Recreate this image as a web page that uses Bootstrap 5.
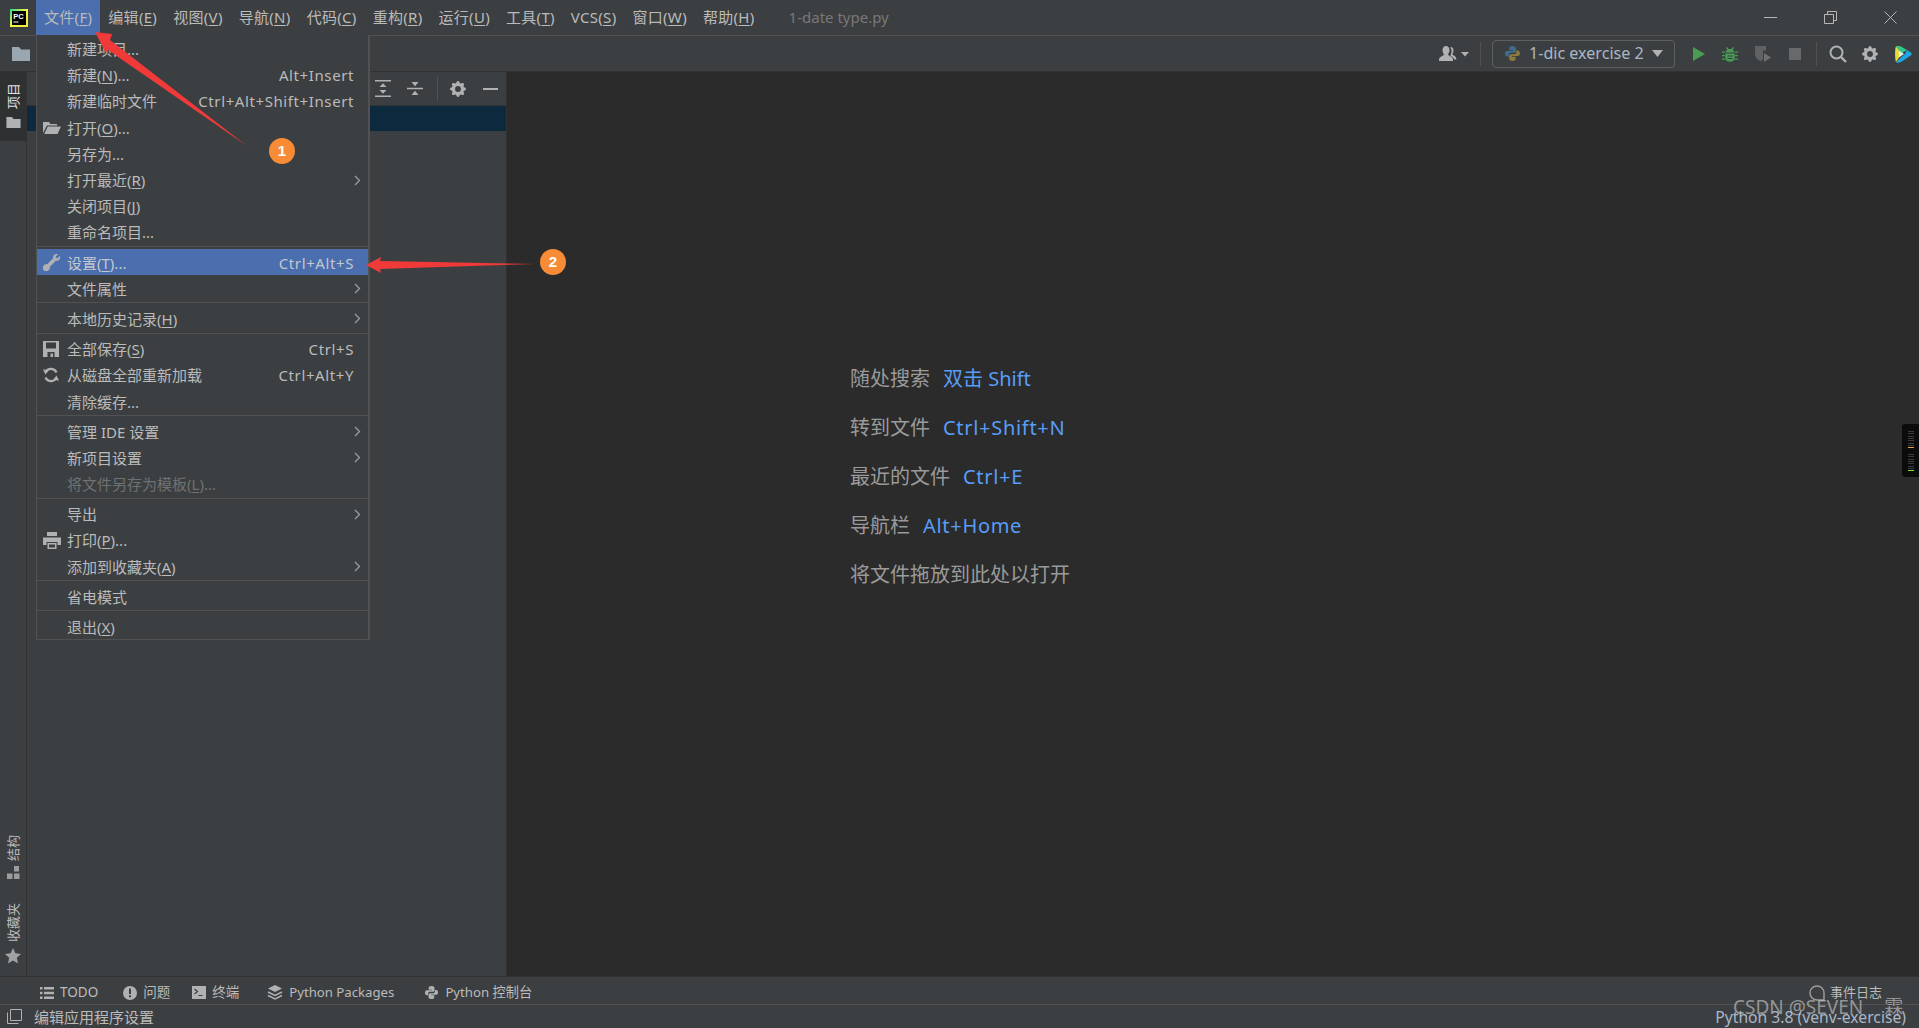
<!DOCTYPE html>
<html lang="zh">
<head>
<meta charset="UTF-8" />
<meta name="viewport" content="width=device-width, initial-scale=1.0" />
<title>PyCharm 设置</title>
<link href="https://cdn.jsdelivr.net/npm/bootstrap@5.3.0/dist/css/bootstrap.min.css" rel="stylesheet" />
<style>
  html, body { height: 100%; }
  body {
    background: #3c3f41;
    color: #bbbbbb;
    font-family: "Noto Sans", "Noto Sans CJK SC", sans-serif;
    font-size: 15px;
    line-height: 1.2;
    overflow: hidden;
  }
  u { text-underline-offset: 2px; }
  svg { display: block; flex: none; }
  .ide-title { height: 36px; border-bottom: 1px solid #515151; }
  .ide-logo { margin: 9px 8px 0 10px; }
  .ide-top { padding: 0 8px; height: 35px; line-height: 35px; white-space: nowrap; letter-spacing: .3px; }
  .ide-top-on { background: #4b6eaf; }
  .ide-file { color: #787878; margin-left: 18px; letter-spacing: 0; }
  .ide-wins { height: 35px; gap: 47px; padding-right: 22px; }
  .ide-bar { height: 35px; padding-left: 12px; }
  .ide-folder { color: #9aa7b0; }
  .ide-run { padding-right: 7px; }
  .ide-vsep { width: 1px; height: 24px; background: #515151; }
  .ide-vsep-a { margin: 0 11px; }
  .ide-vsep-b { margin: 0 12px 0 15px; }
  .ide-combo { width: 183px; height: 28px; border: 1px solid #5e6060; border-radius: 4px; padding: 0 11px; font-size: 16.1px; color: #a9b7c6; }
  .ide-gap-18 { margin-left: 18px; }
  .ide-gap-17 { margin-left: 17px; }
  .ide-gap-16 { margin-left: 16px; }
  .ide-gap-15 { margin-left: 15px; }
  .ide-grey { color: #afb1b3; }
  .ide-body { flex: 1 1 0; min-height: 0; border-top: 1px solid #323232; }
  .ide-strip { width: 27px; border-right: 1px solid #323232; }
  .ide-tab { height: 69px; background: #2e3032; padding-top: 11px; gap: 8px; }
  .ide-rot { writing-mode: vertical-rl; text-orientation: sideways; transform: rotate(180deg); font-size: 13px; line-height: 13px; white-space: nowrap; }
  .ide-tab .ide-rot { color: #e0e0e0; }
  .ide-strip-low { padding-bottom: 12px; }
  .ide-st-ico { margin-top: 5px; }
  .ide-fav { margin-top: 24px; }
  .ide-star { margin-top: 6px; }
  .ide-panel { width: 480px; border-right: 1px solid #323232; }
  .ide-phead { height: 34px; border-bottom: 1px solid #323232; padding-right: 8px; gap: 16px; }
  .ide-ph-collapse { margin-right: -2px; }
  .ide-ph-gear { margin: 0 1px 0 -4px; }
  .ide-psel { height: 25px; background: #0d293e; }
  .ide-editor { background: #2b2b2b; padding: 282px 0 0 343px; font-size: 20px; color: #9a9a9a; }
  .ide-hint { height: 49px; gap: 13px; }
  .ide-hint b { font-weight: 400; color: #589df6; }
  .ide-hint b.ide-keys { letter-spacing: .7px; }
  .ide-tools { height: 28px; border-top: 1px solid #323232; padding: 4px 0 0 40px; font-size: 13.5px; }
  .ide-tool { gap: 6px; margin-right: 22px; white-space: nowrap; }
  .ide-tool-todo { margin-right: 25px; }
  .ide-tool-pk { margin-right: 30px; }
  .ide-tool-term { margin-right: 28px; }
  .ide-tool-py { font-size: 13.2px; }
  .ide-status { height: 24px; border-top: 1px solid #515151; padding-left: 7px; font-size: 15px; }
  .ide-st-box { margin-right: 12px; }
  .ide-log { margin-right: 37px; gap: 5px; font-size: 13px; }
  .ide-py { margin-right: 13px; font-size: 15.7px; color: #a9b7c6; position: relative; top: 1px; }

  .ide-menu {
    --bs-dropdown-bg: #3c3f41;
    --bs-dropdown-border-color: #515151;
    --bs-dropdown-border-radius: 0;
    --bs-dropdown-border-width: 1px;
    --bs-dropdown-padding-y: 0;
    --bs-dropdown-min-width: 0;
    --bs-dropdown-font-size: 15px;
    --bs-dropdown-color: #bbbbbb;
    --bs-dropdown-link-color: #bbbbbb;
    --bs-dropdown-link-hover-color: #bbbbbb;
    --bs-dropdown-link-hover-bg: #4b6eaf;
    --bs-dropdown-link-active-color: #c4c8cc;
    --bs-dropdown-link-active-bg: #4b6eaf;
    --bs-dropdown-link-disabled-color: #6f7173;
    --bs-dropdown-divider-bg: #515151;
    --bs-dropdown-divider-margin-y: 1.5px;
    --bs-dropdown-item-padding-x: 6px;
    --bs-dropdown-item-padding-y: 0;
    top: 35px;
    left: 36px;
    width: 334px;
    border-top: 0;
    border-right-width: 2px;
    z-index: 5;
  }
  .ide-menu .dropdown-divider { opacity: 1; }
  .ide-row { display: flex; align-items: center; height: 26.2px; padding-top: 2px; padding-right: 7px; }
  .ide-ico { width: 18px; margin-right: 6px; flex: none; }
  .ide-key { margin-left: auto; margin-right: 7px; letter-spacing: .6px; }
  .ide-sub { margin-left: auto; }
  .ide-flip { transform: scaleX(-1); }

  .ide-meter { position: absolute; right: 0; top: 424px; z-index: 3; }
  .ide-marks { position: absolute; left: 0; top: 0; z-index: 6; pointer-events: none; }
  .ide-mark-n { font: 700 15px "Liberation Sans", sans-serif; fill: #fff; text-anchor: middle; }
  .ide-water { position: absolute; left: 1733px; top: 996px; z-index: 7; font-size: 19px; color: rgba(205, 205, 205, .62); white-space: nowrap; }
  .ide-water span { margin-left: 21px; }
</style>
</head>
<body class="d-flex flex-column position-relative">

<svg width="0" height="0" class="position-absolute">
  <defs>
    <symbol id="i-gear" viewBox="0 0 16 16"><path fill="currentColor" d="M9.405 1.05c-.413-1.4-2.397-1.4-2.81 0l-.1.34a1.464 1.464 0 0 1-2.105.872l-.31-.17c-1.283-.698-2.686.705-1.987 1.987l.169.311c.446.82.023 1.841-.872 2.105l-.34.1c-1.4.413-1.4 2.397 0 2.81l.34.1a1.464 1.464 0 0 1 .872 2.105l-.17.31c-.698 1.283.705 2.686 1.987 1.987l.311-.169a1.464 1.464 0 0 1 2.105.872l.1.34c.413 1.4 2.397 1.4 2.81 0l.1-.34a1.464 1.464 0 0 1 2.105-.872l.31.17c1.283.698 2.686-.705 1.987-1.987l-.169-.311a1.464 1.464 0 0 1 .872-2.105l.34-.1c1.4-.413 1.4-2.397 0-2.81l-.34-.1a1.464 1.464 0 0 1-.872-2.105l.17-.31c.698-1.283-.705-2.686-1.987-1.987l-.311.169a1.464 1.464 0 0 1-2.105-.872l-.1-.34zM8 10.93a2.929 2.929 0 1 1 0-5.86 2.929 2.929 0 0 1 0 5.858z"/></symbol>
    <symbol id="i-snake" viewBox="0 0 16 16"><path d="M8 1C5.6 1 5 2 5 3.2V5h3.4v.6H3C1.6 5.600 1 6.700 1 8s.6 2.800 2 2.800h1.400V9.200c0-1.100.9-1.900 2-1.900h3.100c1 0 1.700-.8 1.700-1.700V3.200C11.200 2 10 1 8 1z" /></symbol>
    <symbol id="i-chev" viewBox="0 0 7 11"><path fill="none" stroke="#9a9c9e" stroke-width="1.3" d="M1 1l4.500 4.500L1 10"/></symbol>
    <symbol id="i-folder" viewBox="0 0 18 14"><path fill="currentColor" d="M0 0h7l2 2.500h9V14H0z"/></symbol>
  </defs>
</svg>

<!-- title bar -->
<div class="ide-title d-flex align-items-start">
  <svg class="ide-logo" width="18" height="18" viewBox="0 0 18 18">
    <defs><linearGradient id="pcg" x1="0" y1="0" x2="1" y2="1"><stop offset="0" stop-color="#21d789"/><stop offset=".5" stop-color="#fcf84a"/><stop offset="1" stop-color="#e8e832"/></linearGradient></defs>
    <rect width="18" height="18" fill="url(#pcg)"/>
    <rect x="2" y="2" width="14" height="14" fill="#000"/>
    <text x="3.200" y="9.500" font-family="Liberation Sans" font-weight="700" font-size="7.500" fill="#fff">PC</text>
    <rect x="3.500" y="12.500" width="5" height="1" fill="#fff"/>
  </svg>
  <div class="ide-top ide-top-on">文件(<u>F</u>)</div>
  <div class="ide-top">编辑(<u>E</u>)</div>
  <div class="ide-top">视图(<u>V</u>)</div>
  <div class="ide-top">导航(<u>N</u>)</div>
  <div class="ide-top">代码(<u>C</u>)</div>
  <div class="ide-top">重构(<u>R</u>)</div>
  <div class="ide-top">运行(<u>U</u>)</div>
  <div class="ide-top">工具(<u>T</u>)</div>
  <div class="ide-top">VCS(<u>S</u>)</div>
  <div class="ide-top">窗口(<u>W</u>)</div>
  <div class="ide-top">帮助(<u>H</u>)</div>
  <div class="ide-top ide-file">1-date type.py</div>
  <div class="ide-wins ms-auto d-flex align-items-center">
    <svg width="13" height="13" viewBox="0 0 13 13"><path stroke="#b5b7b9" stroke-width="1" d="M0 6.500h13"/></svg>
    <svg width="13" height="13" viewBox="0 0 13 13"><path fill="none" stroke="#b5b7b9" d="M.5 3.500h9v9h-9zM3.500 3.500v-3h9v9h-3"/></svg>
    <svg width="13" height="13" viewBox="0 0 13 13"><path stroke="#b5b7b9" d="M.5.500l12 12M12.500.500l-12 12"/></svg>
  </div>
</div>

<!-- nav toolbar -->
<div class="ide-bar d-flex align-items-center">
  <svg class="ide-folder" width="18" height="14"><use href="#i-folder"/></svg>
  <div class="ide-run ms-auto d-flex align-items-center">
    <svg width="30" height="16" viewBox="0 0 30 16"><path fill="#afb1b3" d="M7 0c2.200 0 3.500 1.700 3.500 4S9.500 7.500 9 8.500c.5 1.300 5 2 5 5.500v1H0v-1c0-3.500 4.500-4.200 5-5.500C4.500 7.500 3.500 6.300 3.500 4S4.800 0 7 0zM11.500 1c2 0 3 1.500 3 3.500s-.8 3-1.200 3.800c.5 1 4 1.700 4 4.700v.5h-2c-.5-2-3-3-4-4 .8-1.500 1.200-2.500 1.200-5 0-1-.3-2-1-2.500z"/><path fill="#afb1b3" d="M22 6h8l-4 4.500z"/></svg>
    <div class="ide-vsep ide-vsep-a"></div>
    <div class="ide-combo d-flex align-items-center">
      <svg width="17" height="17" viewBox="0 0 16 16" class="me-2"><use href="#i-snake" fill="#3f6d92"/><g transform="rotate(180 8 8)"><use href="#i-snake" fill="#8d7a3a"/></g></svg>
      <span>1-dic exercise 2</span>
      <svg class="ms-auto" width="11" height="7" viewBox="0 0 11 7"><path fill="#afb1b3" d="M0 0h11L5.500 7z"/></svg>
    </div>
    <svg class="ide-gap-18" width="12" height="14" viewBox="0 0 12 14"><path fill="#499c54" d="M0 0l12 7-12 7z"/></svg>
    <svg class="ide-gap-17" width="16" height="16" viewBox="0 0 16 16"><g fill="#499c54"><path d="M5 1l1.500 2h3L11 1l1 .7L10.700 4c1 .6 1.600 1.600 1.800 2.500H3.500C3.700 5.600 4.300 4.600 5.300 4L4 1.700z"/><path d="M3.300 7.500h9.400v5c0 1.800-2 3.300-4.700 3.300s-4.700-1.500-4.700-3.300z"/><path d="M0 5.500h3v1.300H0zM13 5.500h3v1.300h-3zM0 9h3v1.300H0zM13 9h3v1.300h-3zM0 12.500h3v1.300H0zM13 12.500h3v1.300h-3z"/></g><path stroke="#3c3f41" stroke-width="1.200" d="M5.500 10h5M5.500 12.500h5"/></svg>
    <svg class="ide-gap-16" width="18" height="18" viewBox="0 0 18 18"><path fill="#5f6163" d="M1 1h11v4.500H9V14l-2 2.500C3 14.500 1 12 1 9z"/><path fill="#6e7072" d="M10 8l7 4.500-7 4.500z"/></svg>
    <svg class="ide-gap-17" width="12" height="12"><rect width="12" height="12" fill="#68696a"/></svg>
    <div class="ide-vsep ide-vsep-b"></div>
    <svg width="18" height="18" viewBox="0 0 18 18"><circle cx="7.500" cy="7.500" r="6" fill="none" stroke="#afb1b3" stroke-width="2"/><path stroke="#afb1b3" stroke-width="2.400" d="M12 12l5 5"/></svg>
    <svg class="ide-gap-15 ide-grey" width="16" height="16"><use href="#i-gear"/></svg>
    <svg class="ide-gap-16" width="18" height="18" viewBox="0 0 18 18">
      <path fill="#36c48c" d="M2 1.500C3 .300 5 .500 7 1.500l6 3.500-8 5z"/>
      <path fill="#1fa6e8" d="M13 5l3.800 2.500c1.200.9 1.200 2.100 0 3L7 17c-2 1-4 1.100-5-.1l9-7.900z"/>
      <path fill="#e3de3c" d="M2 1.500C.8 3 .8 15 2 16.900L7.500 9z"/>
      <path fill="#dfeee8" d="M5 5.500l5 3.500-5 3.500z"/>
    </svg>
  </div>
</div>

<!-- main area -->
<div class="ide-body d-flex">
  <div class="ide-strip d-flex flex-column">
    <div class="ide-tab d-flex flex-column align-items-center">
      <span class="ide-rot">项目</span>
      <svg class="ide-grey" width="15" height="11"><use href="#i-folder"/></svg>
    </div>
    <div class="ide-strip-low mt-auto d-flex flex-column align-items-center">
      <span class="ide-rot">结构</span>
      <svg class="ide-st-ico" width="13" height="13" viewBox="0 0 13 13"><path fill="#9a9c9e" d="M7 0h5v5.500H7zM0 7.500h5.500V13H0zM7 7.500h5.500V13H7z"/></svg>
      <span class="ide-rot ide-fav">收藏夹</span>
      <svg class="ide-star" width="16" height="16" viewBox="0 0 16 16"><path fill="#a0a2a4" d="M8 0l2.400 5.300 5.600.6-4.200 3.800 1.200 5.700L8 12.500l-5 2.900 1.200-5.700L0 5.900l5.600-.6z"/></svg>
    </div>
  </div>

  <div class="ide-panel d-flex flex-column">
    <div class="ide-phead d-flex align-items-center justify-content-end">
      <svg width="16" height="17" viewBox="0 0 16 17"><g fill="#afb1b3"><path d="M0 0h16v1.600H0zM0 15.400h16V17H0zM8 3.300l3.500 3.700h-7zM8 13.700L4.500 10h7z"/></g></svg>
      <svg class="ide-ph-collapse" width="16" height="17" viewBox="0 0 16 17"><g fill="#afb1b3"><path d="M0 7.700h16v1.600H0zM8 6.300L4.500 2h7zM8 10.700l3.500 4.300h-7z"/></g></svg>
      <div class="ide-vsep"></div>
      <svg class="ide-ph-gear ide-grey" width="16" height="16"><use href="#i-gear"/></svg>
      <svg width="15" height="2" viewBox="0 0 15 2"><rect width="15" height="2" fill="#afb1b3"/></svg>
    </div>
    <div class="ide-psel"></div>
  </div>

  <div class="ide-editor flex-grow-1">
    <div class="ide-hint d-flex align-items-center"><span>随处搜索</span><b>双击 Shift</b></div>
    <div class="ide-hint d-flex align-items-center"><span>转到文件</span><b class="ide-keys">Ctrl+Shift+N</b></div>
    <div class="ide-hint d-flex align-items-center"><span>最近的文件</span><b class="ide-keys">Ctrl+E</b></div>
    <div class="ide-hint d-flex align-items-center"><span>导航栏</span><b class="ide-keys">Alt+Home</b></div>
    <div class="ide-hint d-flex align-items-center"><span>将文件拖放到此处以打开</span></div>
  </div>
</div>

<!-- bottom tool windows -->
<div class="ide-tools d-flex align-items-center">
  <div class="ide-tool ide-tool-todo d-flex align-items-center">
    <svg width="14" height="12" viewBox="0 0 14 12"><path fill="#afb1b3" d="M0 0h2.500v2.500H0zM4 0h10v2.500H4zM0 4.700h2.500v2.500H0zM4 4.700h10v2.500H4zM0 9.400h2.500V12H0zM4 9.400h10V12H4z"/></svg><span>TODO</span>
  </div>
  <div class="ide-tool d-flex align-items-center">
    <svg width="14" height="14" viewBox="0 0 14 14"><circle cx="7" cy="7" r="7" fill="#afb1b3"/><path fill="#3c3f41" d="M6 2.500h2V8H6zM6 9.300h2v2H6z"/></svg><span>问题</span>
  </div>
  <div class="ide-tool ide-tool-term d-flex align-items-center">
    <svg width="14" height="13" viewBox="0 0 14 13"><rect width="14" height="13" fill="#afb1b3"/><path fill="none" stroke="#3c3f41" stroke-width="1.200" d="M2.500 3l3 2.500-3 2.500M6.500 9.500h4"/></svg><span>终端</span>
  </div>
  <div class="ide-tool ide-tool-pk ide-tool-py d-flex align-items-center">
    <svg width="16" height="16" viewBox="0 0 16 16"><path fill="#afb1b3" d="M8 0l7 3.500L8 7 1 3.500z"/><path fill="none" stroke="#afb1b3" stroke-width="1.500" d="M1 7l7 3.500L15 7M1 10.500L8 14l7-3.500"/></svg><span>Python Packages</span>
  </div>
  <div class="ide-tool ide-tool-py d-flex align-items-center">
    <svg width="15" height="15" viewBox="0 0 16 16"><use href="#i-snake" fill="#afb1b3"/><g transform="rotate(180 8 8)"><use href="#i-snake" fill="#afb1b3"/></g></svg><span>Python 控制台</span>
  </div>
  <div class="ide-log ms-auto d-flex align-items-center">
    <svg width="16" height="16" viewBox="0 0 16 16"><path fill="none" stroke="#9a9c9e" stroke-width="1.500" d="M15 15H8a7 7 0 1 1 7-7z"/></svg><span>事件日志</span>
  </div>
</div>

<!-- status bar -->
<div class="ide-status d-flex align-items-center">
  <svg class="ide-st-box" width="15" height="15" viewBox="0 0 15 15"><path fill="none" stroke="#afb1b3" d="M3.500.500h11v11h-11zM.5 3.500v11h11"/></svg>
  <span>编辑应用程序设置</span>
  <span class="ide-py ms-auto">Python 3.8 (venv-exercise)</span>
</div>

<!-- open File menu -->
<div class="dropdown-menu show ide-menu">
  <a class="dropdown-item ide-row"><span class="ide-ico"></span><span>新建项目...</span></a>
  <a class="dropdown-item ide-row"><span class="ide-ico"></span><span>新建(<u>N</u>)...</span><span class="ide-key">Alt+Insert</span></a>
  <a class="dropdown-item ide-row"><span class="ide-ico"></span><span>新建临时文件</span><span class="ide-key">Ctrl+Alt+Shift+Insert</span></a>
  <a class="dropdown-item ide-row"><span class="ide-ico"><svg width="18" height="12" viewBox="0 0 18 12"><path fill="#afb1b3" d="M0 0h6l1.500 2H14v1.500H4L0 11zM4.800 4.500H18L14.500 12H1.200z"/></svg></span><span>打开(<u>O</u>)...</span></a>
  <a class="dropdown-item ide-row"><span class="ide-ico"></span><span>另存为...</span></a>
  <a class="dropdown-item ide-row"><span class="ide-ico"></span><span>打开最近(<u>R</u>)</span><svg class="ide-sub" width="7" height="11"><use href="#i-chev"/></svg></a>
  <a class="dropdown-item ide-row"><span class="ide-ico"></span><span>关闭项目(<u>J</u>)</span></a>
  <a class="dropdown-item ide-row"><span class="ide-ico"></span><span>重命名项目...</span></a>
  <hr class="dropdown-divider" />
  <a class="dropdown-item active ide-row"><span class="ide-ico"><svg class="ide-flip" width="17" height="17" viewBox="0 0 16 16"><path fill="#afb1b3" stroke="#afb1b3" stroke-width=".9" d="M.102 2.223A3.004 3.004 0 0 0 3.780 5.897l6.341 6.252A3.003 3.003 0 0 0 13 16a3 3 0 1 0-.851-5.878L5.897 3.781A3.004 3.004 0 0 0 2.223.100l2.141 2.142L4 4l-1.757.364L.102 2.223z"/></svg></span><span>设置(<u>T</u>)...</span><span class="ide-key">Ctrl+Alt+S</span></a>
  <a class="dropdown-item ide-row"><span class="ide-ico"></span><span>文件属性</span><svg class="ide-sub" width="7" height="11"><use href="#i-chev"/></svg></a>
  <hr class="dropdown-divider" />
  <a class="dropdown-item ide-row"><span class="ide-ico"></span><span>本地历史记录(<u>H</u>)</span><svg class="ide-sub" width="7" height="11"><use href="#i-chev"/></svg></a>
  <hr class="dropdown-divider" />
  <a class="dropdown-item ide-row"><span class="ide-ico"><svg width="16" height="16" viewBox="0 0 16 16"><path fill="#afb1b3" d="M0 0h16v16H0z"/><path fill="#3c3f41" d="M3 1.500h10v6H3zM4.500 11h7v5h-7z"/><path fill="#afb1b3" d="M7.500 12.500h2.500V16H7.500z"/></svg></span><span>全部保存(<u>S</u>)</span><span class="ide-key">Ctrl+S</span></a>
  <a class="dropdown-item ide-row"><span class="ide-ico"><svg width="16" height="16" viewBox="0 0 16 16"><path fill="none" stroke="#afb1b3" stroke-width="2.200" d="M13.500 5.500A6 6 0 0 0 3 4.500M2.500 10.500A6 6 0 0 0 13 11.500"/><path fill="#afb1b3" d="M0 2.500l6 .5-3.500 4.500zM16 13.500l-6-.5 3.500-4.500z"/></svg></span><span>从磁盘全部重新加载</span><span class="ide-key">Ctrl+Alt+Y</span></a>
  <a class="dropdown-item ide-row"><span class="ide-ico"></span><span>清除缓存...</span></a>
  <hr class="dropdown-divider" />
  <a class="dropdown-item ide-row"><span class="ide-ico"></span><span>管理 IDE 设置</span><svg class="ide-sub" width="7" height="11"><use href="#i-chev"/></svg></a>
  <a class="dropdown-item ide-row"><span class="ide-ico"></span><span>新项目设置</span><svg class="ide-sub" width="7" height="11"><use href="#i-chev"/></svg></a>
  <a class="dropdown-item disabled ide-row"><span class="ide-ico"></span><span>将文件另存为模板(<u>L</u>)...</span></a>
  <hr class="dropdown-divider" />
  <a class="dropdown-item ide-row"><span class="ide-ico"></span><span>导出</span><svg class="ide-sub" width="7" height="11"><use href="#i-chev"/></svg></a>
  <a class="dropdown-item ide-row"><span class="ide-ico"><svg width="18" height="17" viewBox="0 0 18 17"><path fill="#afb1b3" d="M4 0h10v4H4zM0 5.500h18V13h-3.500v-3h-11v3H0zM4.500 11h9v6h-9z"/><path fill="#3c3f41" d="M6 12.500h6V15.500H6z"/></svg></span><span>打印(<u>P</u>)...</span></a>
  <a class="dropdown-item ide-row"><span class="ide-ico"></span><span>添加到收藏夹(<u>A</u>)</span><svg class="ide-sub" width="7" height="11"><use href="#i-chev"/></svg></a>
  <hr class="dropdown-divider" />
  <a class="dropdown-item ide-row"><span class="ide-ico"></span><span>省电模式</span></a>
  <hr class="dropdown-divider" />
  <a class="dropdown-item ide-row"><span class="ide-ico"></span><span>退出(<u>X</u>)</span></a>
</div>

<!-- floating meter on the right edge -->
<svg class="ide-meter" width="17" height="53" viewBox="0 0 17 53">
  <path fill="#0b0b0b" d="M3 0h14v53H3a3 3 0 0 1-3-3V3a3 3 0 0 1 3-3z"/>
  <g fill="#3a3c3c">
    <rect x="6" y="7" width="6" height="1"/><rect x="6" y="9" width="6" height="1"/><rect x="6" y="12" width="6" height="1"/><rect x="6" y="14" width="6" height="1"/><rect x="6" y="16" width="6" height="1"/><rect x="6" y="19" width="6" height="1"/><rect x="6" y="21" width="6" height="1"/>
    <rect x="6" y="30" width="6" height="1"/><rect x="6" y="32" width="6" height="1"/><rect x="6" y="35" width="6" height="1"/><rect x="6" y="37" width="6" height="1"/><rect x="6" y="39" width="6" height="1"/><rect x="6" y="42" width="6" height="1"/><rect x="6" y="44" width="6" height="1"/>
  </g>
  <rect x="6" y="23" width="6" height="1" fill="#e8a33d"/>
  <rect x="6" y="46" width="6" height="1" fill="#6fe832"/>
</svg>

<!-- red arrows and numbered marks drawn over the screenshot -->
<svg class="ide-marks" width="1919" height="1028" viewBox="0 0 1919 1028">
  <polygon fill="#f03a3a" points="95,32 112,34 110,40 247,146 108,50 106,53"/>
  <polygon fill="#f03a3a" points="366,265 381,257 380,261 535,264 380,269 381,273"/>
  <circle cx="282" cy="151" r="13" fill="#f78b36"/>
  <text class="ide-mark-n" x="282" y="156">1</text>
  <circle cx="553" cy="262" r="13" fill="#f78b36"/>
  <text class="ide-mark-n" x="553" y="267">2</text>
</svg>

<div class="ide-water">CSDN @SEVEN<span>霖</span></div>

<script src="https://cdn.jsdelivr.net/npm/bootstrap@5.3.0/dist/js/bootstrap.bundle.min.js"></script>
</body>
</html>
